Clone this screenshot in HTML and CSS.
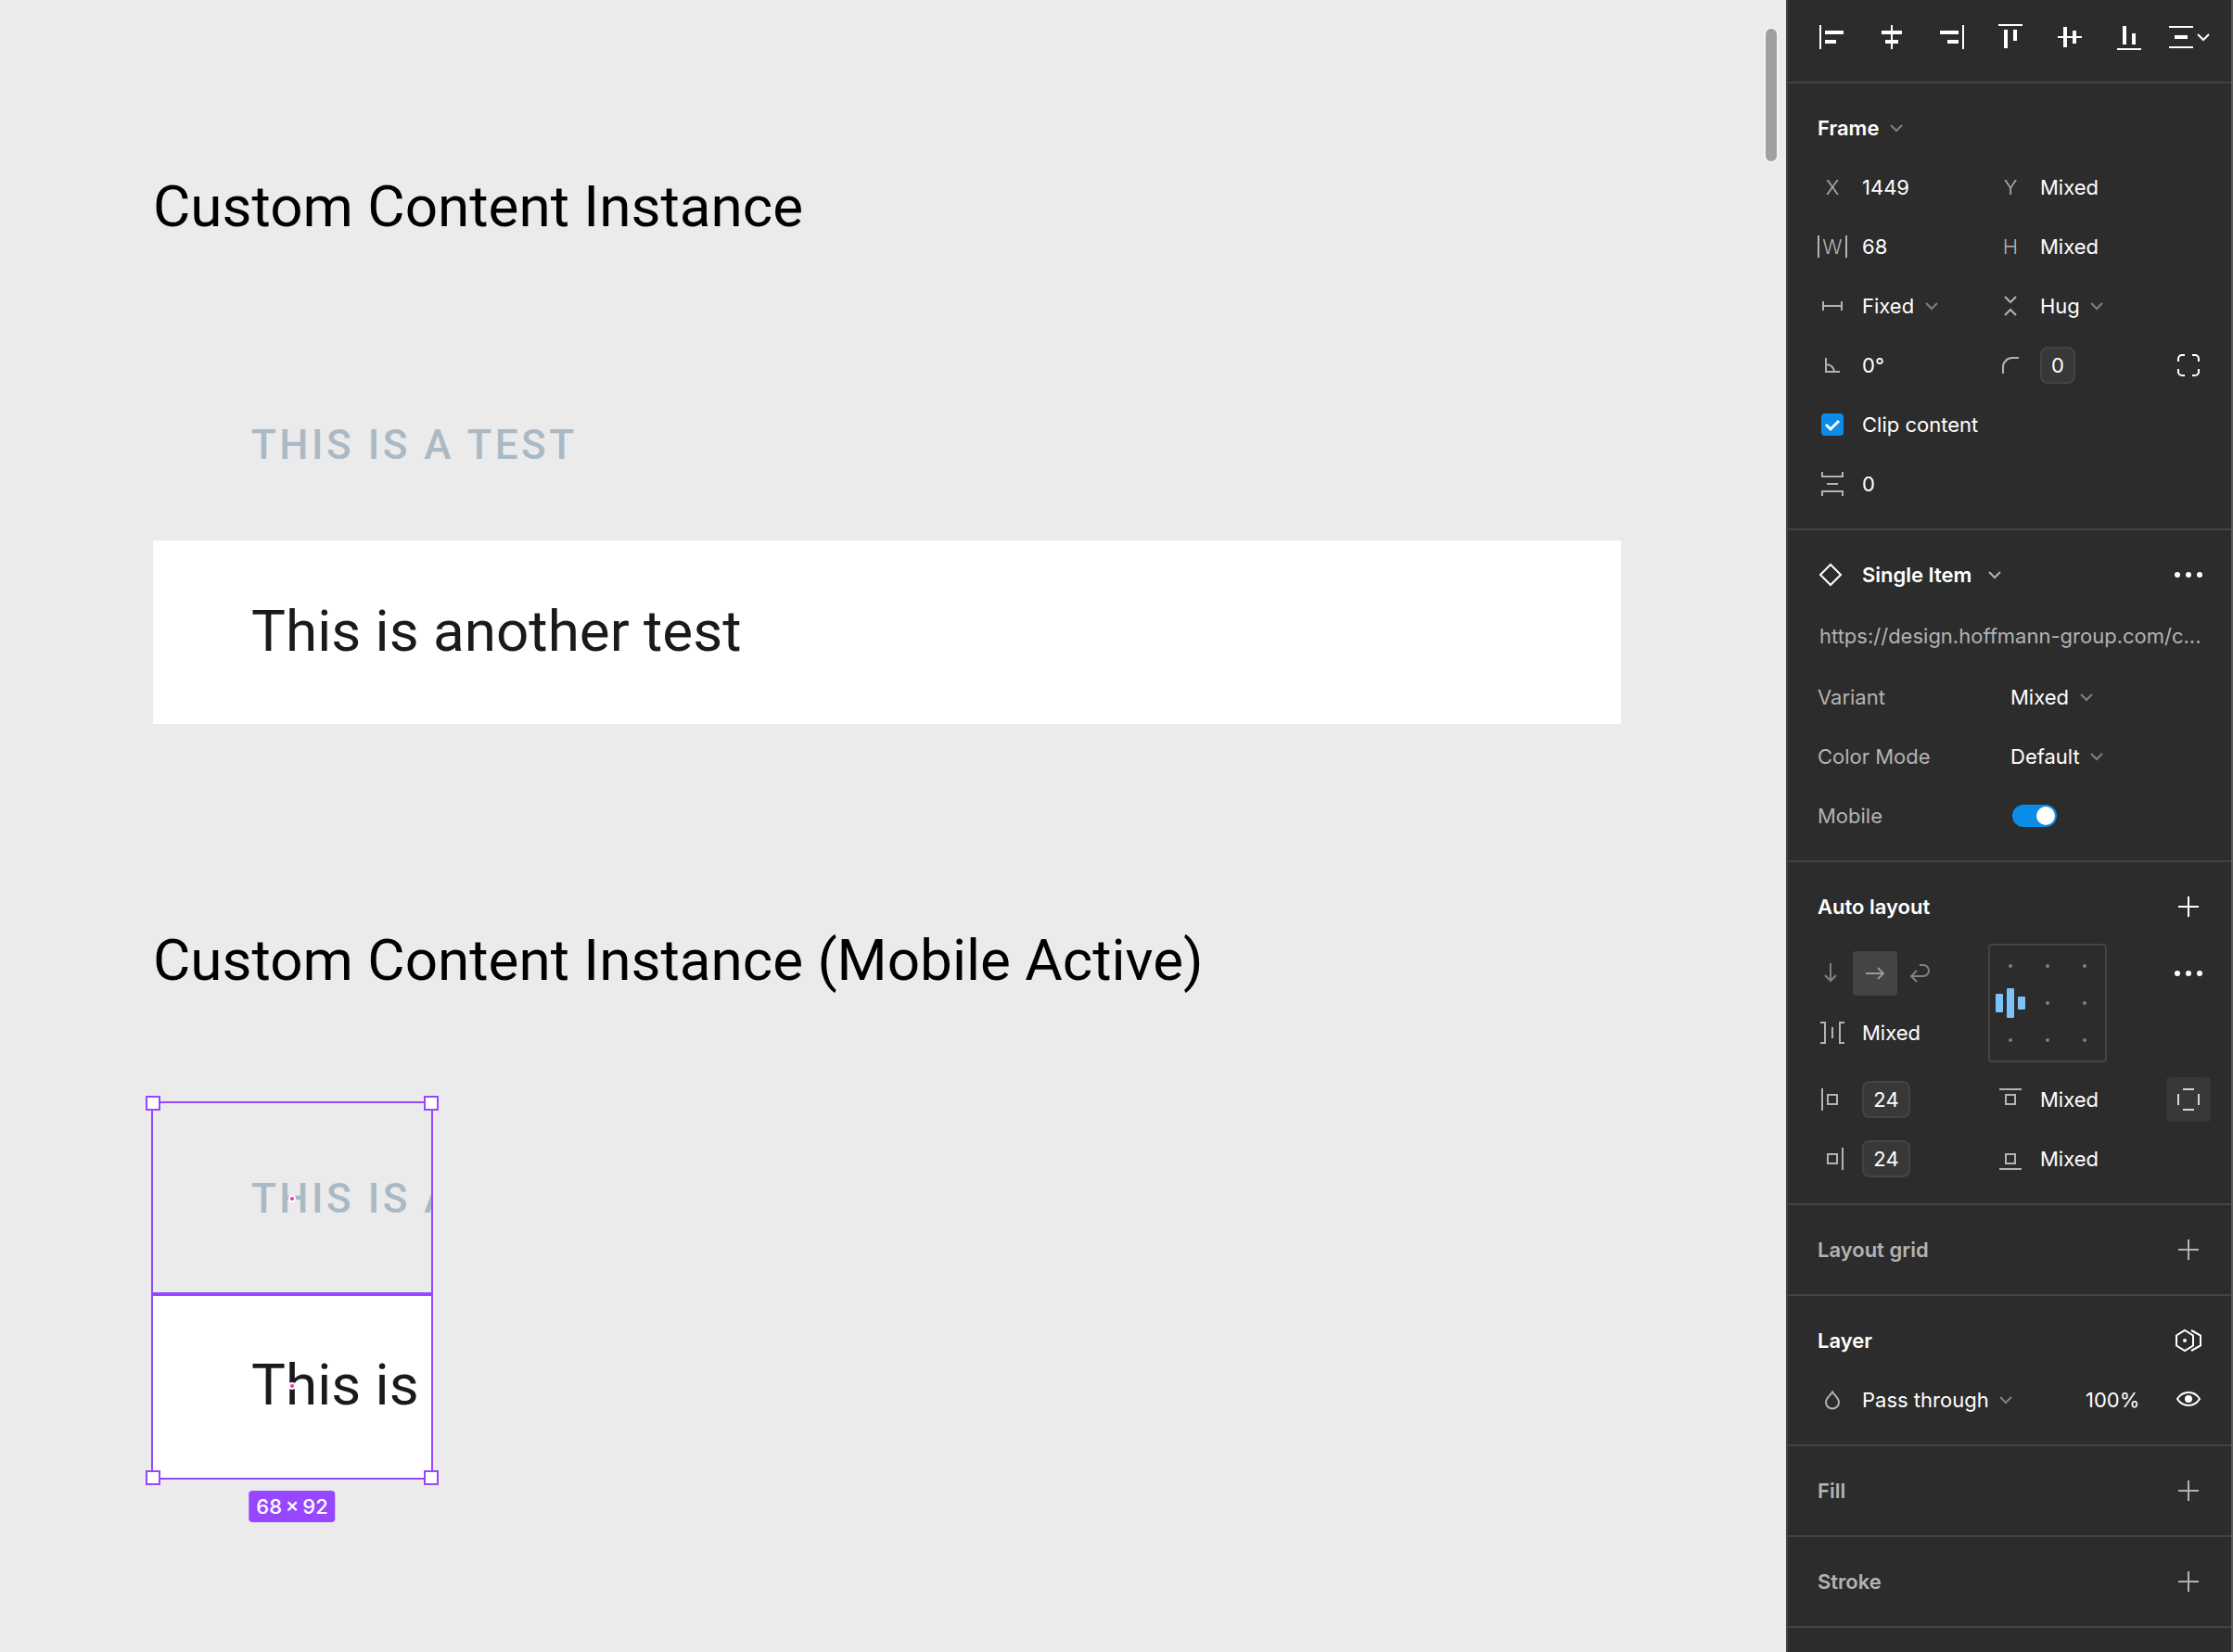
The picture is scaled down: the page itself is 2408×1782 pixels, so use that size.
FILE: index.html
```html
<!DOCTYPE html>
<html lang="en">
<head>
<meta charset="utf-8">
<meta name="viewport" content="width=device-width, initial-scale=1">
<title>Design file</title>
<link rel="stylesheet" href="styles.css">
</head>
<body>
<svg class="sprite" aria-hidden="true">
  <symbol id="chevron" viewBox="0 0 14 10"><path d="M1 2l6 6 6-6"/></symbol>
  <symbol id="plus" viewBox="0 0 48 48"><path d="M24 13v22M13 24h22"/></symbol>
  <symbol id="more" viewBox="0 0 48 48"><g fill="currentColor" stroke="none"><circle cx="12" cy="24" r="3"/><circle cx="24" cy="24" r="3"/><circle cx="36" cy="24" r="3"/></g></symbol>
</svg>
<div class="app">
  <main class="canvas">
    <section class="instance">
      <h1 class="caption">Custom Content Instance</h1>
      <div class="stack">
        <div class="item item-label">THIS IS A TEST</div>
        <div class="item item-text">This is another test</div>
      </div>
    </section>
    <section class="instance">
      <h1 class="caption">Custom Content Instance (Mobile Active)</h1>
      <div class="stack stack-mobile">
        <div class="item item-label"><span class="clip">THIS IS A</span><i class="pin"></i></div>
        <div class="item item-text"><span class="clip">This is</span><i class="pin"></i></div>
        <div class="selection">
          <i class="handle top left"></i><i class="handle top right"></i>
          <i class="handle bottom left"></i><i class="handle bottom right"></i>
          <span class="size">68&thinsp;×&thinsp;92</span>
        </div>
      </div>
    </section>
    <div class="scrollbar"></div>
  </main>

  <aside class="panel">
    <section class="toolbar">
      <button class="icon" aria-label="Align left"><svg viewBox="0 0 48 48"><path class="solid" d="M10 11h2v26h-2zM16 17h20v4H16zM16 27h12v4H16z"/></svg></button>
      <button class="icon" aria-label="Align horizontal centers"><svg viewBox="0 0 48 48"><path class="solid" d="M23 11h2v26h-2zM13 17h22v4H13zM17 27h14v4H17z"/></svg></button>
      <button class="icon" aria-label="Align right"><svg viewBox="0 0 48 48"><path class="solid" d="M36 11h2v26h-2zM12 17h20v4H12zM20 27h12v4H20z"/></svg></button>
      <button class="icon" aria-label="Align top"><svg viewBox="0 0 48 48"><path class="solid" d="M11 10h26v2H11zM17 16h4v20h-4zM27 16h4v12h-4z"/></svg></button>
      <button class="icon" aria-label="Align vertical centers"><svg viewBox="0 0 48 48"><path class="solid" d="M11 23h26v2H11zM17 13h4v22h-4zM27 17h4v14h-4z"/></svg></button>
      <button class="icon" aria-label="Align bottom"><svg viewBox="0 0 48 48"><path class="solid" d="M11 36h26v2H11zM17 12h4v20h-4zM27 20h4v12h-4z"/></svg></button>
      <button class="icon" aria-label="Distribute"><svg viewBox="0 0 48 48"><path class="solid" d="M3 12h26v2H3zM3 34h26v2H3zM9 22h14v4H9z"/><path d="M34 21l6 6 6-6"/></svg></button>
    </section>

    <section class="section">
      <header class="head">
        <button class="title">Frame <svg class="chevron"><use href="#chevron"/></svg></button>
      </header>
      <div class="row">
        <label class="letter" for="x">X</label>
        <input class="value" id="x" value="1449">
        <label class="letter" for="y">Y</label>
        <input class="value" id="y" value="Mixed">
      </div>
      <div class="row">
        <label class="letter" for="w"><span class="bounded">W</span></label>
        <input class="value" id="w" value="68">
        <label class="letter" for="h">H</label>
        <input class="value" id="h" value="Mixed">
      </div>
      <div class="row">
        <label class="icon muted" for="hs" aria-label="Horizontal resizing"><svg viewBox="0 0 48 48"><path d="M14 19v10M34 19v10M14 24h20"/></svg></label>
        <span class="pick"><select id="hs"><option>Fixed</option></select><svg class="chevron"><use href="#chevron"/></svg></span>
        <label class="icon muted" for="vs" aria-label="Vertical resizing"><svg viewBox="0 0 48 48"><path d="M18 14l6 6 6-6M18 34l6-6 6 6"/></svg></label>
        <span class="pick"><select id="vs"><option>Hug</option></select><svg class="chevron"><use href="#chevron"/></svg></span>
      </div>
      <div class="row">
        <label class="icon muted" for="rot" aria-label="Rotation"><svg viewBox="0 0 48 48"><path d="M17 16v15h15M17 23a9 8 0 0 1 9 8"/></svg></label>
        <input class="value" id="rot" value="0°">
        <label class="icon muted" for="rad" aria-label="Corner radius"><svg viewBox="0 0 48 48"><path d="M16 33v-7a10 10 0 0 1 10-10h7"/></svg></label>
        <input class="chip chip-small" id="rad" value="0">
        <button class="icon" aria-label="Independent corners"><svg viewBox="0 0 48 48"><path d="M13 20v-3a4 4 0 0 1 4-4h3M28 13h3a4 4 0 0 1 4 4v3M35 28v3a4 4 0 0 1-4 4h-3M20 35h-3a4 4 0 0 1-4-4v-3"/></svg></button>
      </div>
      <div class="row">
        <input class="check" type="checkbox" id="clip" checked>
        <label class="text wide" for="clip">Clip content</label>
      </div>
      <div class="row">
        <label class="icon muted" for="gap" aria-label="Vertical gap"><svg viewBox="0 0 48 48"><path d="M13 11v5h22v-5M18 24h12M13 37v-5h22v5"/></svg></label>
        <input class="value" id="gap" value="0">
      </div>
    </section>

    <section class="section">
      <header class="head">
        <span class="icon"><svg viewBox="0 0 48 48"><path d="M22 13l11 11-11 11-11-11z"/></svg></span>
        <button class="title title-main">Single Item <svg class="chevron chevron-light"><use href="#chevron"/></svg></button>
        <button class="icon end" aria-label="More options"><svg><use href="#more"/></svg></button>
      </header>
      <div class="link-row"><a href="https://design.hoffmann-group.com/c">https://design.hoffmann-group.com/c...</a></div>
      <div class="prop">
        <label for="variant">Variant</label>
        <span class="pick"><select id="variant"><option>Mixed</option></select><svg class="chevron"><use href="#chevron"/></svg></span>
      </div>
      <div class="prop">
        <label for="mode">Color Mode</label>
        <span class="pick"><select id="mode"><option>Default</option></select><svg class="chevron"><use href="#chevron"/></svg></span>
      </div>
      <div class="prop">
        <label for="mobile">Mobile</label>
        <input class="toggle" type="checkbox" role="switch" id="mobile" checked>
      </div>
    </section>

    <section class="section">
      <header class="head">
        <h2 class="title">Auto layout</h2>
        <button class="icon end" aria-label="Add auto layout"><svg><use href="#plus"/></svg></button>
      </header>
      <div class="layout">
        <div class="layout-left">
          <div class="directions">
            <button class="icon" aria-label="Vertical"><svg viewBox="0 0 48 48"><path d="M24 13v19M18 26l6 6 6-6"/></svg></button>
            <button class="icon on" aria-label="Horizontal"><svg viewBox="0 0 48 48"><path d="M14 24h19M27 18l6 6-6 6"/></svg></button>
            <button class="icon" aria-label="Wrap"><svg viewBox="0 0 48 48"><path d="M24 15h4a6 6 0 0 1 0 12H15M21 21l-6 6 6 6"/></svg></button>
          </div>
          <div class="spacing">
            <label class="icon muted" for="sp" aria-label="Spacing"><svg viewBox="0 0 48 48"><path d="M11 13h5v22h-5M24 18v12M37 13h-5v22h5"/></svg></label>
            <input class="value" id="sp" value="Mixed">
          </div>
        </div>
        <button class="align" aria-label="Alignment">
          <svg viewBox="0 0 128 128"><g class="dots"><circle cx="24" cy="24" r="2"/><circle cx="64" cy="24" r="2"/><circle cx="104" cy="24" r="2"/><circle cx="64" cy="64" r="2"/><circle cx="104" cy="64" r="2"/><circle cx="24" cy="104" r="2"/><circle cx="64" cy="104" r="2"/><circle cx="104" cy="104" r="2"/></g><g class="bars"><rect x="8" y="54" width="8" height="20" rx="1"/><rect x="20" y="48" width="8" height="32" rx="1"/><rect x="32" y="57" width="8" height="14" rx="1"/></g></svg>
        </button>
        <button class="icon end" aria-label="Advanced layout"><svg><use href="#more"/></svg></button>
      </div>
      <div class="row">
        <label class="icon muted" for="pl" aria-label="Left padding"><svg viewBox="0 0 48 48"><path d="M13 12v24M19 19h10v10H19z"/></svg></label>
        <input class="chip" id="pl" value="24">
        <label class="icon muted" for="pt" aria-label="Top padding"><svg viewBox="0 0 48 48"><path d="M12 13h24M19 19h10v10H19z"/></svg></label>
        <input class="value" id="pt" value="Mixed">
        <button class="icon pressed" aria-label="Independent padding"><svg viewBox="0 0 48 48"><path d="M18 13h12M18 35h12M13 18v12M35 18v12"/></svg></button>
      </div>
      <div class="row">
        <label class="icon muted" for="pr" aria-label="Right padding"><svg viewBox="0 0 48 48"><path d="M35 12v24M19 19h10v10H19z"/></svg></label>
        <input class="chip" id="pr" value="24">
        <label class="icon muted" for="pb" aria-label="Bottom padding"><svg viewBox="0 0 48 48"><path d="M12 35h24M19 19h10v10H19z"/></svg></label>
        <input class="value" id="pb" value="Mixed">
      </div>
    </section>

    <section class="section empty">
      <header class="head"><h2 class="title">Layout grid</h2><button class="icon end" aria-label="Add layout grid"><svg><use href="#plus"/></svg></button></header>
    </section>

    <section class="section">
      <header class="head"><h2 class="title">Layer</h2><button class="icon end" aria-label="Apply variable mode"><svg viewBox="0 0 48 48"><path d="M20 13l9 5.500v11L20 35l-9-5.500v-11zM27 13l10 5.500v11L27 35"/><circle class="solid" cx="20" cy="24" r="2"/></svg></button></header>
      <div class="row layer">
        <label class="icon muted" for="blend" aria-label="Blend mode"><svg viewBox="0 0 48 48"><path d="M24 15.500c-2 3.500-7 6.500-7 11a7 7 0 0 0 14 0c0-4.500-5-7.500-7-11z"/></svg></label>
        <span class="pick"><select id="blend"><option>Pass through</option></select><svg class="chevron"><use href="#chevron"/></svg></span>
        <input class="value flush" id="opacity" aria-label="Opacity" value="100%">
        <button class="icon" aria-label="Hide layer"><svg viewBox="0 0 48 48"><path d="M12 23c3-5 7-7 12-7s9 2 12 7c-3 5-7 7-12 7s-9-2-12-7z"/><circle class="solid" cx="24" cy="23" r="4"/></svg></button>
      </div>
    </section>

    <section class="section empty">
      <header class="head"><h2 class="title">Fill</h2><button class="icon end" aria-label="Add fill"><svg><use href="#plus"/></svg></button></header>
    </section>

    <section class="section empty">
      <header class="head"><h2 class="title">Stroke</h2><button class="icon end" aria-label="Add stroke"><svg><use href="#plus"/></svg></button></header>
    </section>
  </aside>
</div>
</body>
</html>
```
FILE: styles.css
```css
* { box-sizing: border-box; }

body {
  margin: 0;
  background: #ebebeb;
  font: 400 22px/32px Inter, sans-serif;
  color: #fff;
}

button, input, select {
  margin: 0;
  padding: 0;
  border: 0;
  background: none;
  color: inherit;
  font: inherit;
  appearance: none;
}

h1, h2 { margin: 0; }

.sprite { position: absolute; width: 0; height: 0; }

svg {
  display: block;
  fill: none;
  stroke: currentColor;
  stroke-width: 2;
}

.solid { fill: currentColor; stroke: none; }

.app {
  display: grid;
  grid-template-columns: minmax(0, 1fr) 482px;
  min-height: 100vh;
}

/* Canvas */

.canvas {
  position: relative;
  display: flex;
  flex-direction: column;
  gap: 219px;
  padding: 187px 178px 0 165px;
  font-family: Roboto, sans-serif;
}

.instance {
  display: flex;
  flex-direction: column;
  gap: 118px;
}

.caption {
  color: #000;
  font-size: 62px;
  font-weight: 400;
  line-height: 72px;
}

.stack { position: relative; }

.stack-mobile { width: 300px; }

.item {
  position: relative;
  display: flex;
  align-items: center;
  padding-left: 106px;
  white-space: nowrap;
}

.item-label {
  height: 206px;
  color: #a9b9c5;
  font-size: 44px;
  font-weight: 500;
  letter-spacing: 0.08em;
}

.item-text {
  height: 198px;
  padding-bottom: 2px;
  background: #fff;
  color: #1a1a1a;
  font-size: 62px;
  line-height: 72px;
}

.clip { overflow: hidden; line-height: 72px; }

.stack-mobile .item { outline: 2px solid #9747ff; }

/* keeps the shared edge of both outlines visible */
.stack-mobile .item-label { z-index: 1; }

.pin {
  position: absolute;
  top: 50%;
  left: 50%;
  width: 8px;
  height: 8px;
  margin: -4px;
  border: 2px solid #fff;
  border-radius: 50%;
  background: #ff24bd;
}

.selection { position: absolute; inset: 0; z-index: 2; }

.handle {
  position: absolute;
  width: 16px;
  height: 16px;
  margin: -8px;
  border: 2px solid #9747ff;
  background: #fff;
}

.top { top: 0; }
.bottom { bottom: 0; }
.left { left: 0; }
.right { right: 0; }

.size {
  position: absolute;
  top: calc(100% + 14px);
  left: 50%;
  transform: translateX(-50%);
  padding: 0 8px;
  border-radius: 4px;
  background: #9747ff;
  font: 500 22px/34px Inter, sans-serif;
  white-space: nowrap;
}

.scrollbar {
  position: absolute;
  top: 31px;
  right: 10px;
  width: 12px;
  height: 143px;
  border-radius: 6px;
  background: #a0a0a0;
  box-shadow: 0 0 0 2px #f2f2f2;
}

/* Panel */

.panel {
  border-left: 2px solid #444;
  border-right: 2px solid #5a5a58;
  background: #2c2c2c;
}

.toolbar, .section {
  padding: 16px 22px 16px 24px;
  border-bottom: 2px solid #444;
}

.toolbar {
  display: flex;
  justify-content: space-between;
  padding-bottom: 24px;
}

.icon {
  display: block;
  flex: none;
  width: 48px;
  height: 48px;
  border-radius: 4px;
}

.icon svg { width: 48px; height: 48px; }

.muted { color: #b3b3b3; }

.end { margin-left: auto; }

.pressed { background: #383838; color: #d5d5d5; }

.head {
  display: flex;
  align-items: center;
  height: 64px;
}

.title {
  display: flex;
  align-items: center;
  gap: 12px;
  padding-left: 8px;
  font-size: 22px;
  font-weight: 600;
}

.title-main { gap: 18px; }

.empty { color: #b3b3b3; }

.chevron {
  flex: none;
  width: 14px;
  height: 10px;
  color: #808080;
}

.chevron-light { color: #b3b3b3; }

.row {
  display: grid;
  grid-template-columns: 48px minmax(0, 1fr) 48px minmax(0, 1fr) 48px;
  align-items: center;
  height: 64px;
}

.layer { grid-template-columns: 48px minmax(0, 1fr) 88px 48px; }

.letter {
  display: flex;
  justify-content: center;
  color: #b3b3b3;
  font-weight: 300;
}

.bounded {
  width: 32px;
  border: solid #b3b3b3;
  border-width: 0 2px;
  line-height: 24px;
  text-align: center;
}

.value {
  width: 100%;
  height: 40px;
  padding-left: 8px;
}

.flush { padding-left: 1px; }

.text { padding-left: 8px; }

.wide { grid-column: 2 / -1; }

.chip {
  width: 52px;
  height: 40px;
  margin-left: 8px;
  border: 2px solid #444;
  border-radius: 8px;
  background: #383838;
  text-align: center;
}

.chip-small { width: 38px; }

.pick {
  display: flex;
  align-items: center;
  gap: 11px;
  padding-left: 8px;
}

.check {
  justify-self: center;
  width: 24px;
  height: 24px;
  border-radius: 4px;
  background: #0c8ce9 url("data:image/svg+xml,%3Csvg xmlns='http://www.w3.org/2000/svg' viewBox='0 0 24 24'%3E%3Cpath d='M5 12l5 5 9-9' fill='none' stroke='white' stroke-width='3'/%3E%3C/svg%3E");
}

.link-row {
  height: 68px;
  padding-left: 10px;
  line-height: 68px;
  white-space: nowrap;
}

.link-row a { color: #b3b3b3; text-decoration: none; }

.prop {
  display: grid;
  grid-template-columns: 200px minmax(0, 1fr);
  align-items: center;
  height: 64px;
  padding-left: 8px;
}

.prop label { color: #b3b3b3; }

.toggle {
  display: flex;
  justify-content: flex-end;
  width: 48px;
  height: 24px;
  margin-left: 10px;
  padding: 2px;
  border-radius: 12px;
  background: #0c8ce9;
}

.toggle::before {
  content: "";
  width: 20px;
  height: 20px;
  border-radius: 50%;
  background: #fff;
}

.layout {
  display: grid;
  grid-template-columns: minmax(0, 1fr) 128px 112px;
  padding: 8px 0;
}

.layout-left { padding-top: 8px; }

.layout .end { margin-top: 8px; }

.directions {
  display: flex;
  height: 48px;
  margin-left: -2px;
  color: #808080;
}

.on { background: #444; color: #999; }

.spacing {
  display: flex;
  align-items: center;
  height: 48px;
  margin-top: 16px;
}

.align {
  width: 128px;
  height: 128px;
  border: 2px solid #444;
  border-radius: 4px;
}

.align svg { width: 128px; height: 128px; margin: -2px; stroke: none; }

.dots { fill: #808080; }

.bars { fill: #7bc4fa; }
```
